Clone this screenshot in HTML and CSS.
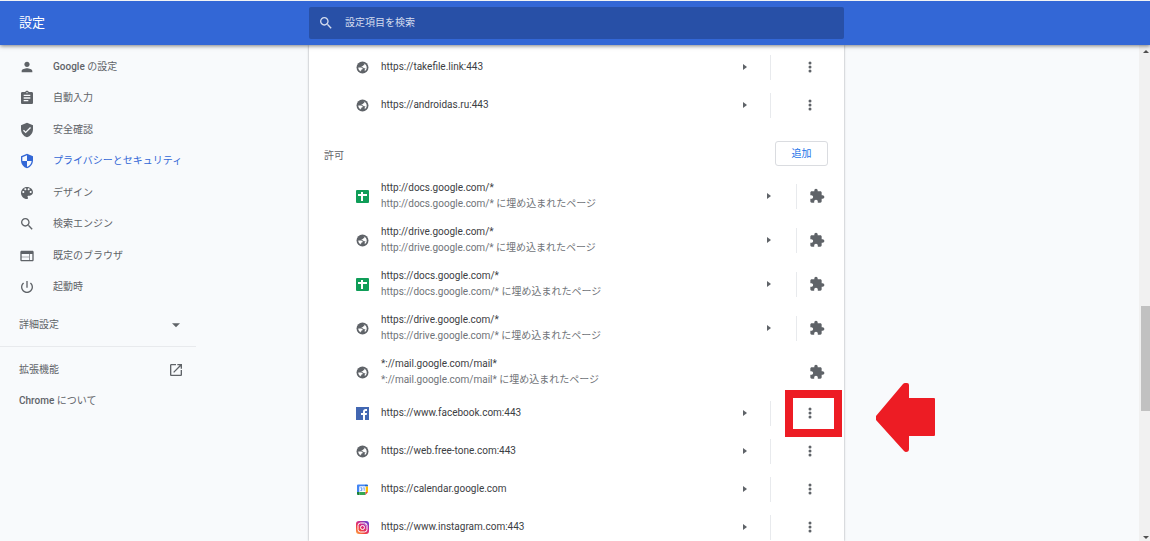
FILE: index.html
```
<!DOCTYPE html>
<html lang="ja">
<head>
<meta charset="utf-8">
<meta name="viewport" content="width=device-width, initial-scale=1">
<title>設定</title>
<link rel="stylesheet" href="styles.css">
</head>
<body>
<svg class="sprite" aria-hidden="true">
  <symbol id="person" viewBox="0 0 24 24"><path d="M12 12c2.21 0 4-1.79 4-4s-1.79-4-4-4-4 1.79-4 4 1.79 4 4 4zm0 2c-2.67 0-8 1.34-8 4v2h16v-2c0-2.66-5.33-4-8-4z"/></symbol>
  <symbol id="assignment" viewBox="0 0 24 24"><path d="M19 3h-4.180C14.400 1.840 13.300 1 12 1s-2.400.84-2.820 2H5c-1.100 0-2 .9-2 2v14c0 1.100.9 2 2 2h14c1.100 0 2-.9 2-2V5c0-1.100-.9-2-2-2zm-7 0c.55 0 1 .45 1 1s-.45 1-1 1-1-.45-1-1 .45-1 1-1zm2 14H7v-2h7v2zm3-4H7v-2h10v2zm0-4H7V7h10v2z"/></symbol>
  <symbol id="verified" viewBox="0 0 24 24"><path d="M12 1L3 5v6c0 5.550 3.840 10.740 9 12 5.160-1.260 9-6.450 9-12V5l-9-4zm-2 16l-4-4 1.410-1.410L10 14.170l6.590-6.590L18 9l-8 8z"/></symbol>
  <symbol id="security" viewBox="0 0 24 24"><path d="M12 1L3 5v6c0 5.550 3.840 10.740 9 12 5.160-1.260 9-6.450 9-12V5l-9-4zm0 10.990h7c-.53 4.120-3.280 7.790-7 8.940V12H5V6.300l7-3.110v8.800z"/></symbol>
  <symbol id="palette" viewBox="0 0 24 24"><path d="M12 3c-4.970 0-9 4.030-9 9s4.030 9 9 9c.83 0 1.500-.67 1.500-1.500 0-.39-.15-.74-.39-1.010-.23-.26-.38-.61-.38-.99 0-.83.67-1.500 1.500-1.500H16c2.760 0 5-2.240 5-5 0-4.420-4.030-8-9-8zm-5.500 9c-.83 0-1.500-.67-1.500-1.500S5.670 9 6.500 9 8 9.670 8 10.500 7.330 12 6.500 12zm3-4C8.670 8 8 7.330 8 6.500S8.670 5 9.500 5s1.500.67 1.500 1.500S10.330 8 9.500 8zm5 0c-.83 0-1.500-.67-1.500-1.500S13.670 5 14.500 5s1.500.67 1.500 1.500S15.330 8 14.500 8zm3 4c-.83 0-1.500-.67-1.500-1.500S16.670 9 17.500 9s1.500.67 1.500 1.500-.67 1.500-1.500 1.500z"/></symbol>
  <symbol id="search" viewBox="0 0 24 24"><path d="M15.500 14h-.79l-.28-.27C15.410 12.590 16 11.110 16 9.500 16 5.910 13.090 3 9.500 3S3 5.910 3 9.500 5.910 16 9.500 16c1.610 0 3.090-.59 4.230-1.570l.27.28v.79l5 4.990L20.490 19l-4.990-5zm-6 0C7.010 14 5 11.990 5 9.500S7.010 5 9.500 5 14 7.010 14 9.500 11.990 14 9.500 14z"/></symbol>
  <symbol id="web" viewBox="0 0 24 24"><path d="M20 4H4c-1.100 0-1.990.9-1.990 2L2 18c0 1.100.9 2 2 2h16c1.100 0 2-.9 2-2V6c0-1.100-.9-2-2-2zm-5 14H4v-4h11v4zm0-5H4V9h11v4zm5 5h-4V9h4v9z"/></symbol>
  <symbol id="power" viewBox="0 0 24 24"><path d="M13 3h-2v10h2V3zm4.830 2.170l-1.420 1.420C17.990 7.860 19 9.810 19 12c0 3.870-3.130 7-7 7s-7-3.130-7-7c0-2.190 1.010-4.140 2.580-5.420L6.170 5.170C4.230 6.820 3 9.260 3 12c0 4.970 4.030 9 9 9s9-4.030 9-9c0-2.740-1.230-5.180-3.170-6.830z"/></symbol>
  <symbol id="down" viewBox="0 0 24 24"><path d="M6 9.500l6 6 6-6z"/></symbol>
  <symbol id="open" viewBox="0 0 24 24"><path d="M19 19H5V5h7V3H5c-1.110 0-2 .9-2 2v14c0 1.100.89 2 2 2h14c1.100 0 2-.9 2-2v-7h-2v7zM14 3v2h3.590l-9.830 9.830 1.410 1.410L19 6.410V10h2V3h-7z"/></symbol>
  <symbol id="globe" viewBox="0 0 24 24"><circle cx="12" cy="12" r="11"/><path fill="#fff" d="M4.200 12.200h4.600c2.400.1 3.800 1 3.800 3.100h-2.300v2H8.900v2C6 17.900 4.100 15.300 4.200 12.200zM14 4.700c3.600.9 5.900 4 5.800 7.600-.1 2.800-1.400 4.900-3.600 6.300l-.2-2.800 1.700-2.200h-2.400c-1.400 0-2.100-.9-2.100-2.100h-2.700V9.500h1.700l1.300-1.700H15c.9 0 1.200-1.500-1-3.100z"/></symbol>
  <symbol id="sheets" viewBox="0 0 13 13"><rect width="13" height="13" rx="1" fill="#0f9d58"/><path fill="#fff" d="M2 4h3V2h2v2h4v2H7v5H5V6H2z"/></symbol>
  <symbol id="facebook" viewBox="0 0 13 13"><rect width="13" height="13" fill="#4267b2"/><path fill="#fff" d="M7 13V8H5V6h2V4.700C7 2.800 8.100 2 9.700 2H11v2H9.900C9.200 4 9 4.400 9 5v1h2l-.3 2H9v5z"/></symbol>
  <symbol id="calendar" viewBox="0 0 13 13"><path fill="#4285f4" d="M1 2.500Q1 1.500 2 1.500h7v2H3.500V9H1z"/><path fill="#1967d2" d="M9 1.500h2q1 0 1 1v1H9z"/><path fill="#fbbc04" d="M9.500 3.500H12V9H9.500z"/><path fill="#34a853" d="M3.500 9h6v3H3.500z"/><path fill="#188038" d="M1 9h2.500v3H2q-1 0-1-1z"/><path fill="#ea4335" d="M9.500 9H12l-2.500 3z"/><path fill="#fff" d="M3.500 3.500h6V9h-6z"/><path fill="none" stroke="#4285f4" stroke-width=".8" d="M4.300 4.800h1.600v1.400H5m.9 0v1.400H4.300M7.300 5l.9-.4v3.200"/></symbol>
  <symbol id="instagram" viewBox="0 0 13 13"><rect width="13" height="13" rx="3" fill="url(#insta-fill)"/><g fill="none" stroke="#fff"><rect x="2" y="2" width="9" height="9" rx="2.500"/><circle cx="6.500" cy="6.500" r="2"/></g><circle cx="9.200" cy="3.800" r=".6" fill="#fff"/></symbol>
  <symbol id="right" viewBox="0 0 8 8"><path d="M1 1v6l4-3z"/></symbol>
  <symbol id="more" viewBox="0 0 16 16"><circle cx="8" cy="4" r="1.500"/><circle cx="8" cy="8" r="1.500"/><circle cx="8" cy="12" r="1.500"/></symbol>
  <symbol id="extension" viewBox="0 0 24 24"><path d="M20.500 11H19V7c0-1.100-.9-2-2-2h-4V3.500C13 2.120 11.880 1 10.500 1S8 2.120 8 3.500V5H4c-1.100 0-1.990.9-1.990 2v3.800H3.500c1.490 0 2.700 1.210 2.700 2.700s-1.210 2.700-2.700 2.700H2V20c0 1.100.9 2 2 2h3.800v-1.500c0-1.490 1.210-2.700 2.700-2.700 1.490 0 2.700 1.210 2.700 2.700V22H17c1.100 0 2-.9 2-2v-4h1.500c1.380 0 2.500-1.120 2.500-2.500S21.880 11 20.500 11z"/></symbol>
  <defs>
    <linearGradient id="insta-fill" x1="0" y1="1" x2=".8" y2="0"><stop offset="0" stop-color="#fdb347"/><stop offset=".35" stop-color="#f2413c"/><stop offset=".65" stop-color="#d02a8c"/><stop offset="1" stop-color="#6a3fd0"/></linearGradient>
  </defs>
</svg>

<header class="toolbar columns">
  <h1 class="toolbar-title">設定</h1>
  <label class="search">
    <svg class="icon"><use href="#search"/></svg>
    <input class="search-input" type="search" placeholder="設定項目を検索" aria-label="設定項目を検索">
  </label>
</header>

<div class="page columns">
  <aside class="sidebar">
    <nav class="menu">
      <a class="menu-item" href="#"><svg class="icon"><use href="#person"/></svg><span><b>Google</b> の設定</span></a>
      <a class="menu-item" href="#"><svg class="icon"><use href="#assignment"/></svg><span>自動入力</span></a>
      <a class="menu-item" href="#"><svg class="icon"><use href="#verified"/></svg><span>安全確認</span></a>
      <a class="menu-item selected" href="#" aria-current="page"><svg class="icon"><use href="#security"/></svg><span>プライバシーとセキュリティ</span></a>
      <a class="menu-item" href="#"><svg class="icon"><use href="#palette"/></svg><span>デザイン</span></a>
      <a class="menu-item" href="#"><svg class="icon"><use href="#search"/></svg><span>検索エンジン</span></a>
      <a class="menu-item" href="#"><svg class="icon"><use href="#web"/></svg><span>既定のブラウザ</span></a>
      <a class="menu-item" href="#"><svg class="icon"><use href="#power"/></svg><span>起動時</span></a>
    </nav>
    <button class="menu-extra advanced" type="button"><span>詳細設定</span><svg class="icon"><use href="#down"/></svg></button>
    <div class="menu-footer">
      <a class="menu-extra" href="#"><span>拡張機能</span><svg class="icon"><use href="#open"/></svg></a>
      <a class="menu-extra" href="#"><span><b>Chrome</b> について</span></a>
    </div>
  </aside>

  <main class="card">
    <ul class="sites">
      <li class="site"><svg class="favicon"><use href="#globe"/></svg><span class="site-text">https://takefile.link:443</span><button class="go" type="button" aria-label="詳細"><svg><use href="#right"/></svg></button><button class="more" type="button" aria-label="その他の操作"><svg class="icon"><use href="#more"/></svg></button></li>
      <li class="site"><svg class="favicon"><use href="#globe"/></svg><span class="site-text">https://androidas.ru:443</span><button class="go" type="button" aria-label="詳細"><svg><use href="#right"/></svg></button><button class="more" type="button" aria-label="その他の操作"><svg class="icon"><use href="#more"/></svg></button></li>
    </ul>
    <div class="section-head">
      <h2 class="section-title">許可</h2>
      <button class="add" type="button">追加</button>
    </div>
    <ul class="sites">
      <li class="site embedded"><svg class="favicon"><use href="#sheets"/></svg><span class="site-text">http://docs.google.com/*<small>http://docs.google.com/* に埋め込まれたページ</small></span><button class="go" type="button" aria-label="詳細"><svg><use href="#right"/></svg></button><span class="managed"><svg><use href="#extension"/></svg></span></li>
      <li class="site embedded"><svg class="favicon"><use href="#globe"/></svg><span class="site-text">http://drive.google.com/*<small>http://drive.google.com/* に埋め込まれたページ</small></span><button class="go" type="button" aria-label="詳細"><svg><use href="#right"/></svg></button><span class="managed"><svg><use href="#extension"/></svg></span></li>
      <li class="site embedded"><svg class="favicon"><use href="#sheets"/></svg><span class="site-text">https://docs.google.com/*<small>https://docs.google.com/* に埋め込まれたページ</small></span><button class="go" type="button" aria-label="詳細"><svg><use href="#right"/></svg></button><span class="managed"><svg><use href="#extension"/></svg></span></li>
      <li class="site embedded"><svg class="favicon"><use href="#globe"/></svg><span class="site-text">https://drive.google.com/*<small>https://drive.google.com/* に埋め込まれたページ</small></span><button class="go" type="button" aria-label="詳細"><svg><use href="#right"/></svg></button><span class="managed"><svg><use href="#extension"/></svg></span></li>
      <li class="site embedded"><svg class="favicon"><use href="#globe"/></svg><span class="site-text">*://mail.google.com/mail*<small>*://mail.google.com/mail* に埋め込まれたページ</small></span><span class="managed plain"><svg><use href="#extension"/></svg></span></li>
      <li class="site"><svg class="favicon"><use href="#facebook"/></svg><span class="site-text">https://www.facebook.com:443</span><button class="go" type="button" aria-label="詳細"><svg><use href="#right"/></svg></button><button class="more" type="button" aria-label="その他の操作"><svg class="icon"><use href="#more"/></svg></button>
        <span class="marker"></span>
        <svg class="pointer" viewBox="0 0 59 69" aria-hidden="true"><path d="M0 33L27 1Q28 0 29 0h2q2 0 2 2v13h25q1 0 1 1v36q0 1-1 1H33v13q0 3-3 3-1 0-2-1L0 37z"/></svg>
      </li>
      <li class="site"><svg class="favicon"><use href="#globe"/></svg><span class="site-text">https://web.free-tone.com:443</span><button class="go" type="button" aria-label="詳細"><svg><use href="#right"/></svg></button><button class="more" type="button" aria-label="その他の操作"><svg class="icon"><use href="#more"/></svg></button></li>
      <li class="site"><svg class="favicon"><use href="#calendar"/></svg><span class="site-text">https://calendar.google.com</span><button class="go" type="button" aria-label="詳細"><svg><use href="#right"/></svg></button><button class="more" type="button" aria-label="その他の操作"><svg class="icon"><use href="#more"/></svg></button></li>
      <li class="site"><svg class="favicon"><use href="#instagram"/></svg><span class="site-text">https://www.instagram.com:443</span><button class="go" type="button" aria-label="詳細"><svg><use href="#right"/></svg></button><button class="more" type="button" aria-label="その他の操作"><svg class="icon"><use href="#more"/></svg></button></li>
    </ul>
  </main>

  <div class="scrollbar" aria-hidden="true">
    <svg viewBox="0 0 8 4"><path d="M0 4l4-4 4 4z"/></svg>
    <div class="track"><div class="thumb"></div></div>
    <svg viewBox="0 0 8 4"><path d="M0 0l4 4 4-4z"/></svg>
  </div>
</div>
</body>
</html>
```
FILE: styles.css
```
* {
  box-sizing: border-box;
}

body {
  display: flex;
  flex-direction: column;
  height: 100vh;
  margin: 0;
  overflow: hidden;
  border-top: 1px solid #f1f3f4;
  background: #f8fafc;
  color: #5f6368;
  font: 10px/16px Roboto, "Noto Sans CJK JP", sans-serif;
}

ul {
  margin: 0;
  padding: 0;
  list-style: none;
}

a {
  color: inherit;
  text-decoration: none;
}

b {
  font-weight: 500;
}

button {
  padding: 0;
  border: 0;
  background: none;
  color: inherit;
  font: inherit;
}

svg {
  display: block;
  flex: none;
  fill: currentColor;
}

.sprite {
  position: absolute;
  width: 0;
  height: 0;
}

.icon {
  width: 16px;
  height: 16px;
}

.columns {
  display: grid;
  grid-template-columns: max(196px, calc(50% - 266px)) minmax(0, 535px) 1fr 11px;
}

/* Toolbar */

.toolbar {
  position: relative;
  z-index: 1;
  align-items: center;
  padding: 6px 0;
  background: #3367d6;
  box-shadow: 0 1px 4px rgba(0, 0, 0, 0.5);
  color: #fff;
}

.toolbar-title {
  margin: 0;
  padding-left: 19px;
  font-size: 13px;
  font-weight: 400;
}

.search {
  display: flex;
  align-items: center;
  gap: 11px;
  height: 32px;
  padding: 0 9px;
  border-radius: 2px;
  background: #2850a7;
  color: #d4dcee;
}

.search-input {
  flex: 1;
  min-width: 0;
  padding: 0;
  border: 0;
  outline: 0;
  background: none;
  color: inherit;
  font: inherit;
}

.search-input::placeholder {
  color: inherit;
}

/* Sidebar */

.page {
  flex: 1;
  grid-template-rows: minmax(0, 1fr);
  min-height: 0;
  overflow: hidden;
}

.sidebar {
  width: 196px;
  padding-top: 6px;
}

.menu {
  display: flex;
  flex-direction: column;
  min-height: 252px;
}

.menu-item {
  display: flex;
  flex: 1;
  align-items: center;
  gap: 18px;
  padding-left: 19px;
}

.selected {
  color: #3367d6;
}

.menu-extra {
  display: flex;
  align-items: center;
  justify-content: space-between;
  width: 100%;
  height: 31px;
  padding: 0 12px 0 19px;
}

.advanced {
  margin: 6px 0;
}

.menu-footer {
  padding-top: 7px;
  border-top: 1px solid #e8eaed;
}

/* Site list */

.card {
  padding-top: 3px;
  background: #fff;
  box-shadow: 0 0 2px rgba(60, 64, 67, 0.5);
}

.site {
  position: relative;
  display: flex;
  align-items: center;
  gap: 12px;
  height: 38px;
  padding: 0 17px 0 47px;
}

.embedded {
  height: 44px;
  padding-right: 18px;
}

.favicon {
  width: 13px;
  height: 13px;
}

.site-text {
  flex: 1;
  min-width: 0;
  color: #3c4043;
}

.site-text small {
  display: block;
  color: #6f7378;
  font-size: 10px;
}

.go {
  display: grid;
  place-items: center;
  width: 24px;
  height: 24px;
}

.go svg {
  width: 8px;
  height: 8px;
}

.more,
.managed {
  display: grid;
  align-items: center;
  height: 25px;
  border-left: 1px solid #e8eaed;
}

.more {
  width: 57px;
  padding-left: 31px;
}

.managed {
  width: 30px;
  margin-left: 2px;
  padding-left: 12px;
}

.managed svg {
  width: 16px;
  height: 16px;
}

.plain {
  border-color: transparent;
}

.section-head {
  display: flex;
  align-items: center;
  justify-content: space-between;
  padding: 17px 16px 8px 15px;
}

.section-title {
  margin: 0;
  padding-top: 4px;
  font-size: 10px;
  font-weight: 400;
}

.add {
  width: 53px;
  height: 25px;
  border: 1px solid #dadce0;
  border-radius: 3px;
  color: #1a73e8;
}

/* Callout drawn over the list */

.marker {
  position: absolute;
  top: -4px;
  right: 2px;
  width: 57px;
  height: 47px;
  border: 8px solid #ed1c24;
  pointer-events: none;
}

.pointer {
  position: absolute;
  top: -11px;
  left: calc(100% + 32px);
  width: 59px;
  height: 69px;
  fill: #ed1c24;
}

/* Scrollbar */

.scrollbar {
  display: flex;
  flex-direction: column;
  grid-column: 4;
  align-items: center;
  padding: 5px 0 2px 2px;
  background: #f1f1f1;
  color: #505050;
}

.scrollbar svg {
  width: 6px;
  height: 3px;
}

.track {
  display: flex;
  flex: 1;
  flex-direction: column;
  align-self: stretch;
}

.track::before {
  flex: 253;
  content: "";
}

.track::after {
  flex: 125;
  content: "";
}

.thumb {
  flex: 105;
  background: #c1c1c1;
}
```
